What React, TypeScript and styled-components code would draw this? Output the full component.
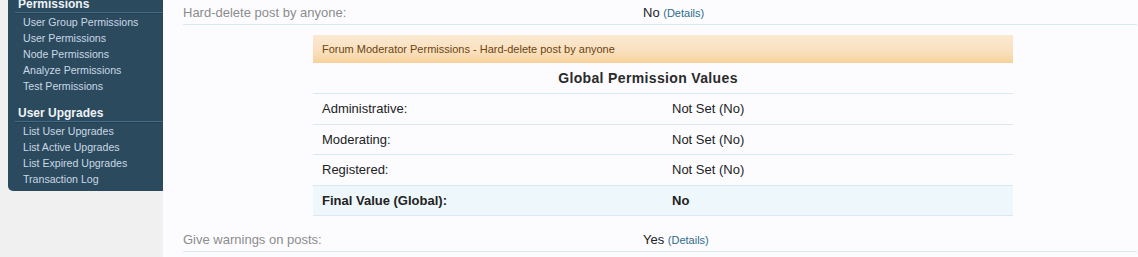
import React from "react";
import styled, { createGlobalStyle } from "styled-components";

const GlobalStyle = createGlobalStyle`
  html, body {
    margin: 0;
    padding: 0;
    background: #f0f0f0;
    font-family: "Liberation Sans", Arial, sans-serif;
    overflow: hidden;
  }
`;

const Page = styled.div`
  display: flex;
  min-height: 257px;
`;

const SideColumn = styled.div`
  width: 155px;
  padding-left: 8px;
  flex-shrink: 0;
`;

const SidePanel = styled.nav`
  margin-top: -4px;
  padding-bottom: 4px;
  background: #2c4a5e;
  border-bottom-left-radius: 5px;
`;

const SideSection = styled.div`
  & + & {
    margin-top: 11px;
  }
`;

const SideHeading = styled.div`
  margin-left: 7px;
  padding-left: 3px;
  font-size: 12px;
  font-weight: bold;
  line-height: 16px;
  color: #eef3f7;
  border-bottom: 1px solid #3f6d8f;
  box-shadow: 0 1px 0 #25404f;
  margin-bottom: 1px;
`;

const SideLink = styled.a`
  display: block;
  padding-left: 15px;
  font-size: 10.6px;
  line-height: 16px;
  color: #c9d8e4;
  text-decoration: none;
`;

const Content = styled.main`
  flex: 1;
  background: #fcfcff;
  padding: 0 1px 0 20px;
`;

const FormRow = styled.div`
  display: grid;
  grid-template-columns: 460px 1fr;
  padding: 4px 0 2px;
  border-bottom: 1px solid #d7eaf2;
  line-height: 18px;
`;

const RowLabel = styled.div`
  font-size: 13px;
  color: #8c8c8c;
`;

const RowValue = styled.div`
  font-size: 13px;
  color: #222;
`;

const DetailsLink = styled.a`
  font-size: 11px;
  color: #2d6b8c;
  text-decoration: none;
`;

const DetailBox = styled.div`
  width: 700px;
  margin: 10px 0 11px 130px;
`;

const BoxTitle = styled.div`
  height: 28px;
  line-height: 29px;
  padding-left: 9px;
  font-size: 11px;
  color: #6c4411;
  background: linear-gradient(to bottom, #fbe9d3 0%, #f9e0bd 60%, #f7d19b 100%);
`;

const ValueTable = styled.div`
  display: flex;
  flex-direction: column;
`;

const TableCaption = styled.div`
  padding: 0 30px 0 0;
  height: 30px;
  line-height: 30px;
  text-align: center;
  font-size: 14px;
  font-weight: bold;
  letter-spacing: 0.35px;
  color: #2a2a2a;
  border-bottom: 1px solid #d7eaf2;
`;

const TableRow = styled.div<{ $final?: boolean }>`
  display: grid;
  grid-template-columns: 1fr 1fr;
  padding: 6px 9px;
  line-height: 17.5px;
  font-size: 13px;
  color: #222;
  font-weight: ${({ $final }) => ($final ? "bold" : "normal")};
  background: ${({ $final }) => ($final ? "#eef7fb" : "transparent")};
  border-bottom: 1px solid #d7eaf2;

  span + span {
    padding-left: 9px;
  }
`;

const sidebar = [
  {
    title: "Permissions",
    links: [
      "User Group Permissions",
      "User Permissions",
      "Node Permissions",
      "Analyze Permissions",
      "Test Permissions",
    ],
  },
  {
    title: "User Upgrades",
    links: [
      "List User Upgrades",
      "List Active Upgrades",
      "List Expired Upgrades",
      "Transaction Log",
    ],
  },
];

const groups = [
  { label: "Administrative:", value: "Not Set (No)" },
  { label: "Moderating:", value: "Not Set (No)" },
  { label: "Registered:", value: "Not Set (No)" },
];

export default function App() {
  return (
    <>
      <GlobalStyle />
      <Page>
        <SideColumn>
          <SidePanel>
            {sidebar.map((section) => (
              <SideSection key={section.title}>
                <SideHeading>{section.title}</SideHeading>
                {section.links.map((link) => (
                  <SideLink key={link} href="#">
                    {link}
                  </SideLink>
                ))}
              </SideSection>
            ))}
          </SidePanel>
        </SideColumn>
        <Content>
          <FormRow>
            <RowLabel>Hard-delete post by anyone:</RowLabel>
            <RowValue>
              No <DetailsLink href="#">(Details)</DetailsLink>
            </RowValue>
          </FormRow>

          <DetailBox>
            <BoxTitle>Forum Moderator Permissions - Hard-delete post by anyone</BoxTitle>
            <ValueTable>
              <TableCaption>Global Permission Values</TableCaption>
              {groups.map((g) => (
                <TableRow key={g.label}>
                  <span>{g.label}</span>
                  <span>{g.value}</span>
                </TableRow>
              ))}
              <TableRow $final>
                <span>Final Value (Global):</span>
                <span>No</span>
              </TableRow>
            </ValueTable>
          </DetailBox>

          <FormRow>
            <RowLabel>Give warnings on posts:</RowLabel>
            <RowValue>
              Yes <DetailsLink href="#">(Details)</DetailsLink>
            </RowValue>
          </FormRow>
        </Content>
      </Page>
    </>
  );
}
